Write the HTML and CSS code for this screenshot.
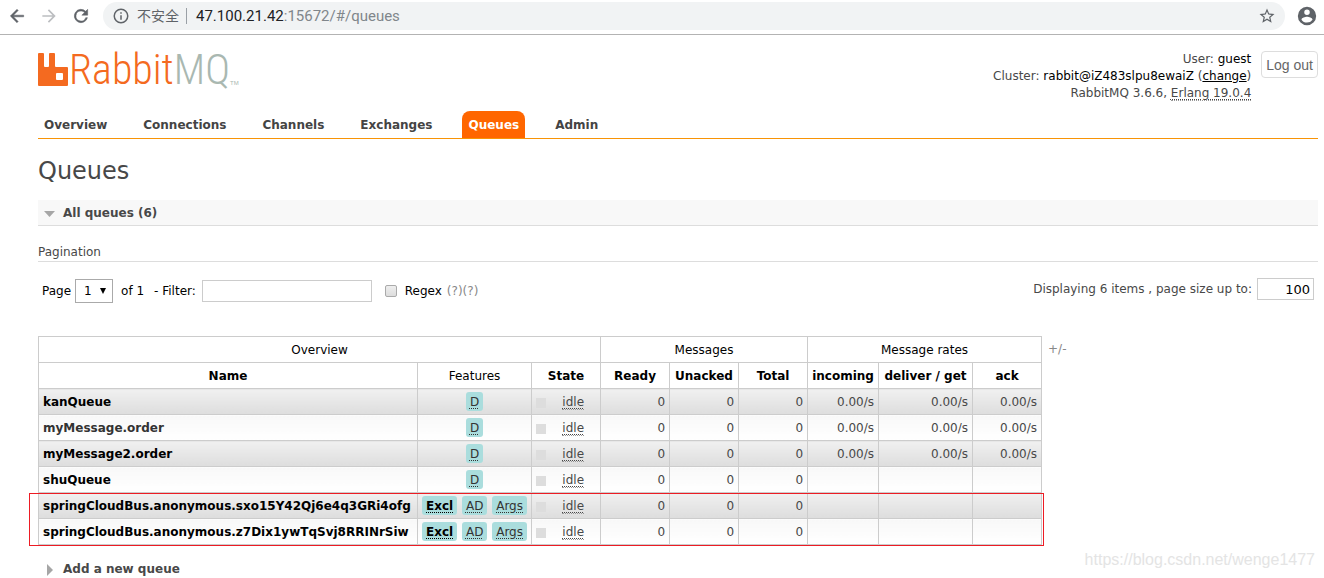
FILE: index.html
```html
<!DOCTYPE html>
<html lang="en">
<head>
<meta charset="utf-8">
<title>RabbitMQ Management</title>
<link rel="stylesheet" href="styles.css">
</head>
<body>
<div class="browser">
  <button class="tool" aria-label="Back"><svg width="20" height="20" viewBox="0 0 24 24"><path fill="#5f6368" stroke="#5f6368" stroke-width=".6" d="M20 11H7.8l5.6-5.6L12 4l-8 8 8 8 1.4-1.4L7.8 13H20z"/></svg></button>
  <button class="tool" aria-label="Forward"><svg width="20" height="20" viewBox="0 0 24 24"><path fill="#bcbec1" d="M12 4l-1.4 1.4 5.6 5.6H4v2h12.2l-5.6 5.6L12 20l8-8z"/></svg></button>
  <button class="tool" aria-label="Reload"><svg width="20" height="20" viewBox="0 0 24 24"><path fill="#5f6368" stroke="#5f6368" stroke-width=".6" d="M17.65 6.35A8 8 0 1 0 19.73 14h-2.08A6 6 0 1 1 12 6c1.66 0 3.14.69 4.22 1.78L13 11h7V4z"/></svg></button>
  <div class="omnibox">
    <svg width="18" height="18" viewBox="0 0 24 24"><path fill="#5f6368" d="M11 7h2v2h-2zm0 4h2v6h-2zm1-9a10 10 0 1 0 0 20 10 10 0 0 0 0-20zm0 18a8 8 0 1 1 0-16 8 8 0 0 1 0 16z"/></svg>
    <span class="insecure">不安全</span>
    <span class="url"><b>47.100.21.42</b>:15672/#/queues</span>
    <svg width="18" height="18" viewBox="0 0 24 24"><path fill="#5f6368" d="M22 9.24l-7.19-.62L12 2 9.19 8.63 2 9.24l5.46 4.73L5.82 21 12 17.27 18.18 21l-1.63-7.03zM12 15.4l-3.76 2.27 1-4.28-3.32-2.88 4.38-.38L12 6.1l1.71 4.04 4.38.38-3.32 2.88 1 4.28z"/></svg>
  </div>
  <button class="tool" aria-label="Profile"><svg width="22" height="22" viewBox="0 0 24 24"><path fill="#5f6368" d="M12 2a10 10 0 1 0 0 20 10 10 0 0 0 0-20zm0 3a3 3 0 1 1 0 6 3 3 0 0 1 0-6zm0 14.2a7.2 7.2 0 0 1-6-3.22c.03-1.99 4-3.08 6-3.08s5.97 1.09 6 3.08a7.2 7.2 0 0 1-6 3.22z"/></svg></button>
</div>

<div class="page">
  <header class="header">
    <a class="logo" href="#/" aria-label="RabbitMQ">
      <svg width="30" height="34" viewBox="0 0 30 34"><path fill="#f46a20" fill-rule="evenodd" d="M1 0h4q1 0 1 1v12q0 1 1 1h3q1 0 1-1V1q0-1 1-1h4q1 0 1 1v12q0 1 1 1h11q1 0 1 1v17q0 1-1 1H1q-1 0-1-1V1q0-1 1-1zM19 20q-1 0-1 1v5q0 1 1 1h5q1 0 1-1v-5q0-1-1-1z"/></svg>
      <span class="word">Rabbit<span class="mq">MQ</span></span><span class="tm">TM</span>
    </a>
    <div class="account">
      <div class="facts">
        <div>User: <b>guest</b></div>
        <div>Cluster: <b>rabbit@iZ483slpu8ewaiZ</b> (<a href="#/cluster-name">change</a>)</div>
        <div>RabbitMQ 3.6.6, <abbr>Erlang 19.0.4</abbr></div>
      </div>
      <button class="logout">Log out</button>
    </div>
  </header>

  <nav class="tabs">
    <a href="#/">Overview</a>
    <a href="#/connections">Connections</a>
    <a href="#/channels">Channels</a>
    <a href="#/exchanges">Exchanges</a>
    <a href="#/queues" class="selected">Queues</a>
    <a href="#/users">Admin</a>
  </nav>

  <main>
    <h1>Queues</h1>
    <h2 class="section open"><svg width="11" height="6"><path fill="#a6a6a6" d="M0 0h11L5.500 6z"/></svg>All queues (6)</h2>
    <h3>Pagination</h3>
    <div class="pager">
      <label for="page">Page</label>
      <span class="picker"><select id="page"><option>1</option></select><svg width="6" height="6"><path d="M0 0h6L3 6z"/></svg></span>
      <span class="of">of 1</span>
      <label class="filter" for="filter">- Filter:</label>
      <input type="text" id="filter" class="filter-box">
      <input type="checkbox" id="regex" class="tick">
      <label for="regex">Regex</label>
      <span class="help">(?)(?)</span>
      <div class="sizing">
        <label for="size">Displaying 6 items , page size up to:</label>
        <input type="text" id="size" class="size-box" value="100">
      </div>
    </div>

    <div class="list">
      <div class="grid">
        <table>
          <colgroup><col class="c-name"><col class="c-feat"><col class="c-num"><col class="c-num"><col class="c-num"><col class="c-num"><col class="c-in"><col class="c-get"><col class="c-num"></colgroup>
          <thead>
            <tr><th colspan="3" class="plain">Overview</th><th colspan="3" class="plain">Messages</th><th colspan="3" class="plain">Message rates</th></tr>
            <tr><th>Name</th><th class="plain">Features</th><th>State</th><th>Ready</th><th>Unacked</th><th>Total</th><th>incoming</th><th>deliver / get</th><th>ack</th></tr>
          </thead>
          <tbody>
            <tr><td><a href="#/q/1">kanQueue</a></td><td class="feat"><span class="tag"><abbr>D</abbr></span></td><td><div class="state"><i></i><abbr>idle</abbr></div></td><td class="r">0</td><td class="r">0</td><td class="r">0</td><td class="r">0.00/s</td><td class="r">0.00/s</td><td class="r">0.00/s</td></tr>
            <tr><td><a href="#/q/2" class="soft">myMessage.order</a></td><td class="feat"><span class="tag"><abbr>D</abbr></span></td><td><div class="state"><i></i><abbr>idle</abbr></div></td><td class="r">0</td><td class="r">0</td><td class="r">0</td><td class="r">0.00/s</td><td class="r">0.00/s</td><td class="r">0.00/s</td></tr>
            <tr><td><a href="#/q/3">myMessage2.order</a></td><td class="feat"><span class="tag"><abbr>D</abbr></span></td><td><div class="state"><i></i><abbr>idle</abbr></div></td><td class="r">0</td><td class="r">0</td><td class="r">0</td><td class="r">0.00/s</td><td class="r">0.00/s</td><td class="r">0.00/s</td></tr>
            <tr><td><a href="#/q/4">shuQueue</a></td><td class="feat"><span class="tag"><abbr>D</abbr></span></td><td><div class="state"><i></i><abbr>idle</abbr></div></td><td class="r">0</td><td class="r">0</td><td class="r">0</td><td></td><td></td><td></td></tr>
            <tr><td><a href="#/q/5">springCloudBus.anonymous.sxo15Y42Qj6e4q3GRi4ofg</a></td><td class="feat"><div class="tags"><span class="tag strong"><abbr>Excl</abbr></span><span class="tag"><abbr>AD</abbr></span><span class="tag"><abbr>Args</abbr></span></div></td><td><div class="state"><i></i><abbr>idle</abbr></div></td><td class="r">0</td><td class="r">0</td><td class="r">0</td><td></td><td></td><td></td></tr>
            <tr><td><a href="#/q/6">springCloudBus.anonymous.z7Dix1ywTqSvj8RRINrSiw</a></td><td class="feat"><div class="tags"><span class="tag strong"><abbr>Excl</abbr></span><span class="tag"><abbr>AD</abbr></span><span class="tag"><abbr>Args</abbr></span></div></td><td><div class="state"><i></i><abbr>idle</abbr></div></td><td class="r">0</td><td class="r">0</td><td class="r">0</td><td></td><td></td><td></td></tr>
          </tbody>
        </table>
        <div class="marker"></div>
      </div>
      <a class="columns" href="#/columns">+/-</a>
    </div>

    <h2 class="section"><svg width="11" height="12"><path fill="#a6a6a6" d="M3 0v12l6-6z"/></svg>Add a new queue</h2>
  </main>
</div>
<div class="watermark">https://blog.csdn.net/wenge1477</div>
</body>
</html>
```
FILE: styles.css
```css
* { box-sizing: border-box; }
body {
  margin: 0;
  overflow: hidden;
  background: #fff;
  color: #484848;
  font: 12px/18px "DejaVu Sans", Verdana, sans-serif;
}
svg { display: block; flex: none; }
button, input, select { font: inherit; margin: 0; }

/* browser toolbar */
.browser {
  display: flex;
  align-items: center;
  gap: 12px;
  height: 35px;
  padding: 0 6px 3px 7px;
  border-bottom: 1px solid #b3b3b3;
}
.tool { border: 0; padding: 0; background: none; }
.tool:last-child { margin-left: -1px; }
.omnibox {
  flex: 1;
  display: flex;
  align-items: center;
  height: 28px;
  padding: 0 9px;
  border-radius: 14px;
  background: #f1f3f4;
  color: #80868b;
  font: 15px/20px "Noto Sans", "Noto Sans CJK SC", sans-serif;
}
.insecure {
  margin: 0 9px 0 7px;
  padding-right: 7px;
  border-right: 1px solid #9aa0a6;
  color: #5f6368;
  font-size: 14px;
  line-height: 16px;
}
.url { flex: 1; font-family: Roboto, sans-serif; }
.url b { font-weight: 400; color: #202124; }

/* header */
.page { padding: 16px 6px 0 38px; }
.header { display: flex; justify-content: space-between; align-items: flex-start; height: 60px; }
.logo { display: flex; align-items: flex-start; padding-top: 2px; text-decoration: none; color: #f46a20; }
.word { margin-left: 1px; font: 300 42px/34px "Liberation Sans Narrow", "Roboto Condensed", "Open Sans Condensed", Roboto, sans-serif; }
.mq { color: #a9b8b1; }
.tm { align-self: flex-end; color: #a9b8b1; font: 6px/8px "Liberation Sans", sans-serif; }
.account { display: flex; align-items: flex-start; gap: 10px; }
.facts { text-align: right; line-height: 17px; }
.facts b { font-weight: 400; color: #000; }
.facts a { color: #000; }
abbr {
  text-decoration: underline dotted 1px;
  text-underline-offset: 2px;
  border-bottom: 1px dotted #999;
}
.logout {
  height: 27px;
  padding: 0 4px;
  border: 1px solid #ddd;
  border-radius: 4px;
  background: #fff;
  color: #666;
  font: 14px/20px "Liberation Sans", sans-serif;
}

/* tabs */
.tabs { display: flex; gap: 24px; border-bottom: 1px solid #f89406; }
.tabs a {
  padding: 5px 6px 4px;
  border-radius: 8px 8px 0 0;
  color: #444;
  font-weight: 700;
  text-decoration: none;
}
.tabs .selected { background: #f60; color: #fff; }

/* sections */
h1 { margin: 18px 0 14px; font-size: 24px; line-height: 29px; font-weight: 400; }
.section {
  display: flex;
  align-items: center;
  gap: 8px;
  margin: 0;
  padding: 5px 6px 3px;
  font-size: 12px;
  line-height: 17px;
}
.open { background: #f8f8f8; border-bottom: 1px solid #ddd; }
h3 {
  margin: 17px 0;
  border-bottom: 1px solid #ddd;
  font-size: 12px;
  font-weight: 400;
  line-height: 18px;
}

/* pagination */
.pager { display: flex; align-items: center; height: 24px; padding: 0 4px; color: #000; }
.picker { position: relative; margin: 0 8px 0 4px; }
.picker select {
  display: block;
  appearance: none;
  width: 38px;
  height: 24px;
  padding: 0 0 0 8px;
  border: 1px solid #aaa;
  border-radius: 0;
  background: #fff;
}
.picker svg { position: absolute; right: 7px; top: 9px; pointer-events: none; }
.filter { margin: 0 6px 0 10px; }
.filter-box, .size-box { height: 22px; border: 1px solid #ccc; background: #fff; }
.filter-box { width: 170px; }
.tick {
  appearance: none;
  width: 12px;
  height: 12px;
  margin: 0 8px 0 13px;
  border: 1px solid #aaa;
  border-radius: 2px;
  background: linear-gradient(#eee, #ddd);
}
.help { margin-left: 5px; color: #888; }
.sizing { display: flex; align-self: flex-start; align-items: center; gap: 5px; height: 20px; margin-left: auto; color: #484848; }
.size-box { width: 57px; padding: 0 3px; text-align: right; font-size: 13px; }

/* queue table */
.list { display: flex; gap: 6px; margin: 33px 0 11px; }
.grid { position: relative; }
table { width: 1004px; table-layout: fixed; border-collapse: collapse; line-height: 17px; }
.c-name { width: 379px; }
.c-feat { width: 114px; }
.c-num { width: 69px; }
.c-in { width: 71px; }
.c-get { width: 94px; }
th, td { height: 26px; padding: 2px 4px 0; border: 1px solid #ccc; white-space: nowrap; }
th { padding: 2px 0 0; color: #000; text-align: center; }
.plain { font-weight: 400; }
tbody tr:nth-child(odd) td { background: linear-gradient(#f0f0f0, #ddd); }
tbody tr:nth-child(even) td { background: linear-gradient(#f8f8f8, #fff); }
td a { color: #000; font-weight: 700; text-decoration: none; }
td .soft { color: #333; }
.r { text-align: right; }
td.feat { padding-top: 0; text-align: center; }
.tags { display: flex; justify-content: space-between; }
.tag {
  display: inline-block;
  padding: 3px 4px 2px;
  border-radius: 3px;
  background: #aadddd;
  color: #333;
  line-height: 14px;
}
.tag abbr { border: 0; }
.strong { color: #000; font-weight: 700; }
.state { display: flex; align-items: center; justify-content: space-between; padding-right: 12px; line-height: 14px; }
.state i { width: 10px; height: 10px; background: #ddd; }
.marker {
  position: absolute;
  left: -9px;
  right: -2px;
  bottom: -1px;
  height: 53px;
  border: 1px solid #ed1c24;
  pointer-events: none;
}
.columns { margin-top: 4px; color: #888; text-decoration: none; }

.watermark {
  position: absolute;
  right: 9px;
  bottom: 8px;
  color: #e4e4e4;
  font: 16px/20px "Liberation Sans", sans-serif;
}
```
